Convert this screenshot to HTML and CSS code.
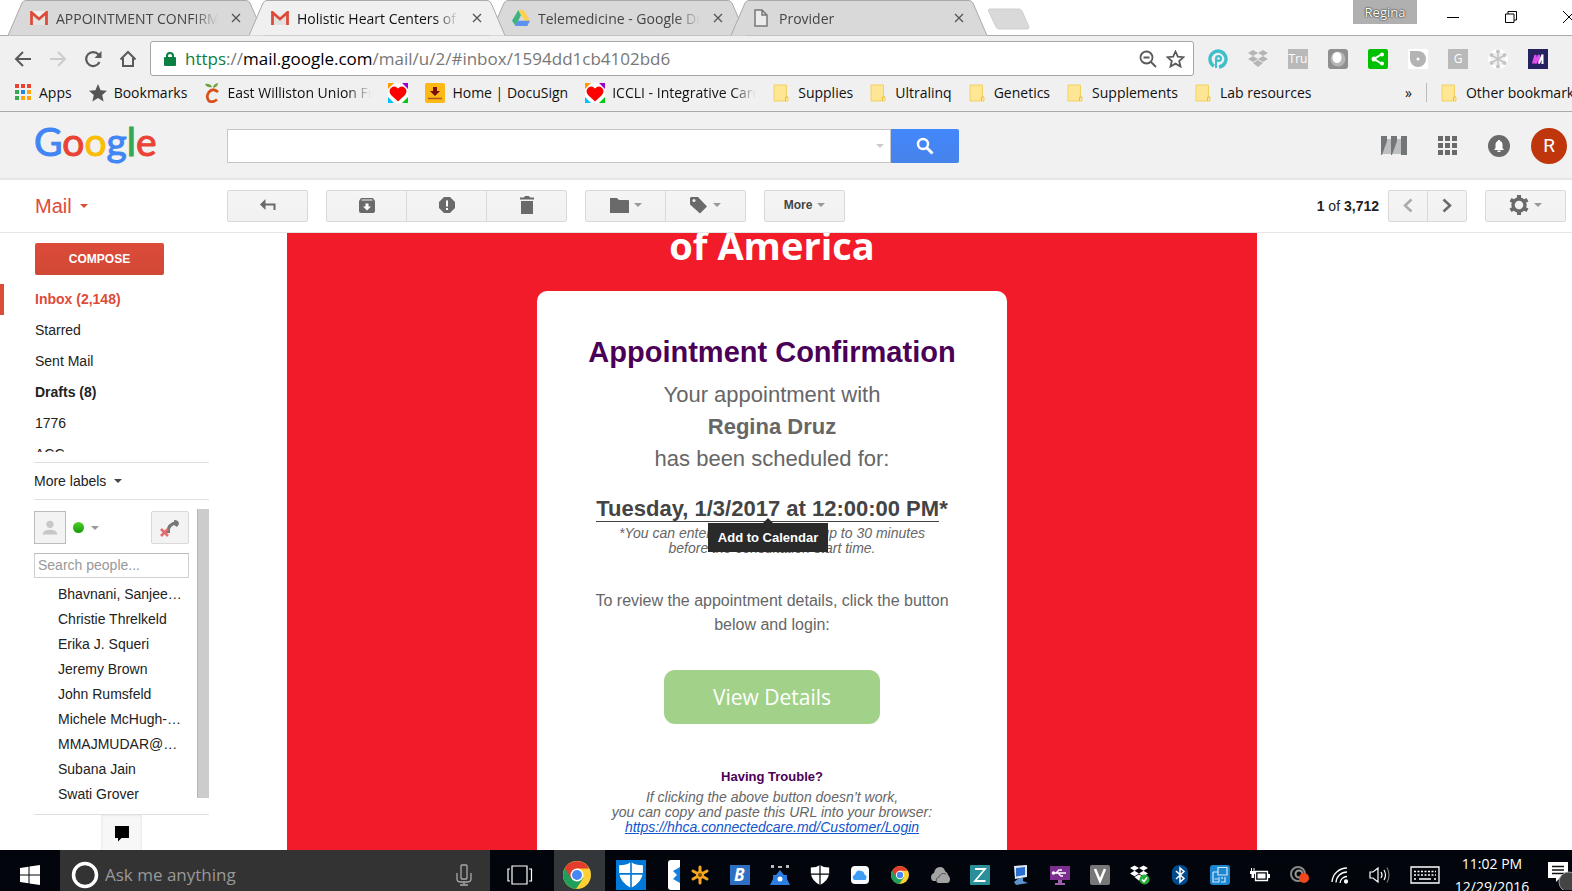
FILE: index.html
```html
<!DOCTYPE html>
<html lang="en">
<head>
  <meta charset="UTF-8" />
  <meta name="viewport" content="width=device-width, initial-scale=1.0"/>
  <title>Holistic Heart Centers of America - Gmail</title>
  <link rel="stylesheet" href="styles.css">
</head>
<body>
  <!-- shared icons -->
  <svg class="defs" width="0" height="0">
    <symbol id="tab-shape" viewBox="0 0 256 36" preserveAspectRatio="none">
      <path d="M0 35.5 L14 3 Q15.500 .5 18 .5 H238 Q240.500 .5 242 3 L256 35.500" />
    </symbol>
    <symbol id="close" viewBox="0 0 10 10"><path d="M1 1 L9 9 M9 1 L1 9" stroke="#555" stroke-width="1.300" /></symbol>
    <symbol id="gmail" viewBox="0 0 18 14">
      <rect width="18" height="14" rx="1" fill="#eee" />
      <path d="M3 3 L9 8 L15 3 V14 H3z" fill="#e2e2e2" />
      <path d="M1.500 14 V1.500 L9 8 L16.500 1.500 V14" fill="none" stroke="#dd4b39" stroke-width="2.800" />
    </symbol>
    <symbol id="folder" viewBox="0 0 16 18">
      <path d="M1 1 H13.500 V13 H15 V17 H1z" fill="#ffe694" stroke="#f2d063" />
      <path d="M12.500 17 V13 H15" fill="none" stroke="#e9bf40" />
    </symbol>
    <symbol id="heart" viewBox="0 0 20 20">
      <rect width="20" height="20" fill="#fff" />
      <path d="M0 0 H6 L0 6z" fill="#ff9a00" /><path d="M14 0 H20 V6z" fill="#9a00d0" />
      <path d="M0 14 V20 H6z" fill="#00c0ff" /><path d="M20 14 V20 H14z" fill="#00c814" />
      <path d="M10 18.500 L3 12 Q0 8 3 5 Q6.500 2 10 5.500 Q13.500 2 17 5 Q20 8 17 12z" fill="red" />
    </symbol>
    <symbol id="chrome" viewBox="0 0 28 28">
      <circle cx="14" cy="14" r="14" fill="#fdd033" />
      <path d="M14 14 L1.900 7 A14 14 0 0 0 13 28 L20 17.500z" fill="#1fa05a" />
      <path d="M1.900 7 A14 14 0 0 1 26.200 7.500 H14 L8 17.500z" fill="#e33b2e" />
      <circle cx="14" cy="14" r="6.500" fill="#fff" /><circle cx="14" cy="14" r="5" fill="#4688f4" />
    </symbol>
    <symbol id="shield" viewBox="0 0 22 24">
      <path d="M11 0 Q15 3 22 3 V10 Q21 19 11 24 Q1 19 0 10 V3 Q7 3 11 0z" fill="#fff" />
      <path d="M11 0 V24 M0 11 H22" stroke="currentColor" stroke-width="1.500" />
    </symbol>
    <symbol id="dropbox" viewBox="0 0 20 18">
      <path d="M5 0 L10 3 L5 6 L0 3z M15 0 L20 3 L15 6 L10 3z M5 6 L10 9 L5 12 L0 9z M15 6 L20 9 L15 12 L10 9z M5 13 L10 10 L15 13 L10 17z" fill="currentColor" />
    </symbol>
  </svg>

  <header class="browser">
    <div class="tab-strip">
      <div class="tab">
        <svg class="tab-bg"><use href="#tab-shape" /></svg>
        <svg width="18" height="14"><use href="#gmail" /></svg>
        <span class="tab-title">APPOINTMENT CONFIRMATION</span>
        <button class="tab-close" aria-label="Close tab"><svg width="10" height="10"><use href="#close" /></svg></button>
      </div>
      <div class="tab active">
        <svg class="tab-bg"><use href="#tab-shape" /></svg>
        <svg width="18" height="14"><use href="#gmail" /></svg>
        <span class="tab-title">Holistic Heart Centers of America</span>
        <button class="tab-close" aria-label="Close tab"><svg width="10" height="10"><use href="#close" /></svg></button>
      </div>
      <div class="tab">
        <svg class="tab-bg"><use href="#tab-shape" /></svg>
        <svg width="18" height="18" viewBox="0 0 20 18">
          <path d="M7 0 H13 L20 12 H14z" fill="#ffd04b" /><path d="M7 0 L10 6 L4 18 L0 12z" fill="#3fb37f" /><path d="M6.500 12 H20 L17 18 H3.500z" fill="#5b92f0" />
        </svg>
        <span class="tab-title">Telemedicine - Google Drive</span>
        <button class="tab-close" aria-label="Close tab"><svg width="10" height="10"><use href="#close" /></svg></button>
      </div>
      <div class="tab">
        <svg class="tab-bg"><use href="#tab-shape" /></svg>
        <svg width="18" height="18" viewBox="0 0 18 18"><path d="M2 1 H9 L14 6 V17 H2z M9 1 V6 H14" fill="#ececec" stroke="#777" stroke-width="1.500" /></svg>
        <span class="tab-title">Provider</span>
        <button class="tab-close" aria-label="Close tab"><svg width="10" height="10"><use href="#close" /></svg></button>
      </div>
      <button class="new-tab" aria-label="New tab">
        <svg width="44" height="22" viewBox="0 0 44 22"><path d="M3 1 H32 Q34 1 35 3 L42 19 Q42 21 40 21 H12 Q10 21 9 19 L1.500 3 Q1 1 3 1z" fill="#d9d9d9" stroke="#cfcfcf" /></svg>
      </button>
      <div class="window-controls">
        <button class="profile">Regina</button>
        <button class="win" aria-label="Minimize"><svg width="12" height="12"><path d="M0 6.500 H12" stroke="#000" /></svg></button>
        <button class="win" aria-label="Restore"><svg width="12" height="12" fill="none" stroke="#000"><path d="M.5 3 H9 V11.500 H.5z M3 3 V.5 H11.500 V9 H9" /></svg></button>
        <button class="win" aria-label="Close"><svg width="12" height="12"><path d="M0 0 L12 12 M12 0 L0 12" stroke="#000" /></svg></button>
      </div>
    </div>

    <div class="address-row">
      <div class="nav-buttons">
        <button aria-label="Back"><svg width="18" height="18" fill="none" stroke="#5a5a5a" stroke-width="2"><path d="M17 9 H2 M9 2 L2 9 L9 16" /></svg></button>
        <button aria-label="Forward"><svg width="18" height="18" fill="none" stroke="#ccc" stroke-width="2"><path d="M1 9 H16 M9 2 L16 9 L9 16" /></svg></button>
        <button aria-label="Reload"><svg width="18" height="18" fill="none" stroke="#5a5a5a" stroke-width="2.200"><path d="M15.500 12 A7 7 0 1 1 14.500 4.500" /><path d="M17.500 1 V8 H10.500z" fill="#5a5a5a" stroke="none" /></svg></button>
        <button aria-label="Home"><svg width="18" height="18" fill="none" stroke="#5a5a5a" stroke-width="2"><path d="M1.500 9.500 L9 2 L16.500 9.500 M4 8 V16 H14 V8" /></svg></button>
      </div>
      <div class="omnibox">
        <svg width="12" height="14" viewBox="0 0 12 14"><rect y="5" width="12" height="9" rx="1" fill="#0b8043" /><path d="M3 6 V4 Q3 1 6 1 Q9 1 9 4 V6" fill="none" stroke="#0b8043" stroke-width="2" /></svg>
        <span class="url"><span class="scheme">https</span>://<span class="host">mail.google.com</span>/mail/u/2/#inbox/1594dd1cb4102bd6</span>
        <button aria-label="Zoom"><svg width="18" height="18" fill="none" stroke="#5a5a5a" stroke-width="1.800"><circle cx="7.500" cy="7.500" r="6" /><path d="M4.500 7.500 H10.500 M12 12 L17 17" /></svg></button>
        <button aria-label="Bookmark this page"><svg width="19" height="18" viewBox="0 0 19 18"><path d="M9.500 1.500 L11.800 6.700 L17.500 7.200 L13.200 11 L14.500 16.500 L9.500 13.600 L4.500 16.500 L5.800 11 L1.500 7.200 L7.200 6.700z" fill="none" stroke="#5a5a5a" stroke-width="1.800" /></svg></button>
      </div>
      <div class="extensions">
        <button aria-label="Extension"><svg width="20" height="20"><path d="M6 17 A8 8 0 1 1 11 18" fill="none" stroke="#3fbfcb" stroke-width="3.400" /><circle cx="10.500" cy="9.500" r="3.500" fill="#3fbfcb" /><circle cx="10.500" cy="9.500" r="1.300" fill="#f0f0f0" /><path d="M8 10 V19" stroke="#3fbfcb" stroke-width="2" /></svg></button>
        <button class="dim" aria-label="Dropbox"><svg width="20" height="18"><use href="#dropbox" /></svg></button>
        <button class="ext-letter" aria-label="Tru">Tru</button>
        <button aria-label="Extension"><svg width="20" height="20"><rect width="20" height="20" rx="3" fill="#8f8f8f" /><circle cx="10" cy="10" r="7.500" fill="#b5b5b5" /><ellipse cx="9" cy="8.500" rx="4.500" ry="5.500" fill="#fff" /></svg></button>
        <button aria-label="Share"><svg width="20" height="20"><rect width="20" height="20" rx="2" fill="#00c000" /><path d="M14 5 L6 10 L14 15" fill="none" stroke="#fff" stroke-width="2" /><circle cx="14" cy="5.500" r="2" fill="#fff" /><circle cx="6" cy="10" r="2.500" fill="#fff" /><circle cx="14" cy="14.500" r="2" fill="#fff" /></svg></button>
        <button aria-label="Extension"><svg width="20" height="20"><rect width="20" height="20" fill="#fff" /><path d="M2 2 H10 A8 8 0 1 1 2 10z" fill="#b3b3b3" /><circle cx="10" cy="10" r="1.500" fill="#fff" /></svg></button>
        <button class="ext-letter" aria-label="G">G</button>
        <button aria-label="Extension"><svg width="20" height="20" fill="none" stroke="#c4c4c4" stroke-width="1.500"><circle cx="10" cy="10" r="8.500" stroke="#fff" stroke-width="3" /><path d="M10 3 V17 M4 6.500 L16 13.500 M16 6.500 L4 13.500" /><g fill="#c4c4c4" stroke="none"><circle cx="10" cy="2.500" r="2" /><circle cx="10" cy="17.500" r="2" /><circle cx="3.500" cy="6" r="2" /><circle cx="16.500" cy="6" r="2" /><circle cx="3.500" cy="14" r="2" /><circle cx="16.500" cy="14" r="2" /></g></svg></button>
        <button aria-label="Extension"><svg width="20" height="20"><rect width="20" height="20" fill="#262262" /><path d="M5 14.500 L7.500 6 V14.500 L11 6 V14.500" fill="none" stroke="#e44df0" stroke-width="2.200" /><path d="M11 14.500 L14.500 5.500 V15" fill="none" stroke="#fff" stroke-width="2" /></svg></button>
      </div>
    </div>

    <nav class="bookmarks">
      <a href="#"><svg width="17" height="17"><g fill="#ea4335"><path d="M0 0h4v4h-4z M6 0h4v4h-4z M12 0h4v4h-4z" /></g><path d="M0 6h4v4h-4z M0 12h4v4h-4z" fill="#34a853" /><path d="M6 6h4v4h-4z" fill="#1e88e5" /><path d="M12 6h4v4h-4z M6 12h4v4h-4z M12 12h4v4h-4z" fill="#fba60d" /></svg>Apps</a>
      <a href="#"><svg width="18" height="18" viewBox="0 0 18 18"><path d="M9 0 L11.600 6.200 L18 6.800 L13.200 11 L14.600 17.500 L9 14 L3.400 17.500 L4.800 11 L0 6.800 L6.400 6.200z" fill="#555" /></svg>Bookmarks</a>
      <a href="#"><svg width="16" height="20"><path d="M14 9 Q9 4.500 5 9 Q1.500 14 5 18 Q9 20 13 16.500" fill="none" stroke="#d8501c" stroke-width="2.800" /><path d="M1 1 Q6 0 8 4 Q3 5 1 1z M9 5 Q9 1 14 0 Q14 4 9 5z" fill="#6ba33a" /></svg><span class="cut">East Williston Union Free</span></a>
      <a href="#" aria-label="Heart"><svg width="20" height="20"><use href="#heart" /></svg></a>
      <a href="#"><svg width="20" height="20"><rect width="20" height="20" rx="2" fill="#fcb814" /><path d="M8 4 H12 V8 H15 L10 13 L5 8 H8z" fill="#7a0d0d" /><path d="M3 15.500 H17" stroke="#b5541b" stroke-width="1.500" /></svg>Home | DocuSign</a>
      <a href="#"><svg width="20" height="20"><use href="#heart" /></svg><span class="cut">ICCLI - Integrative Cardiology</span></a>
      <a class="folder" href="#"><svg width="16" height="18"><use href="#folder" /></svg>Supplies</a>
      <a class="folder" href="#"><svg width="16" height="18"><use href="#folder" /></svg>Ultralinq</a>
      <a class="folder" href="#"><svg width="16" height="18"><use href="#folder" /></svg>Genetics</a>
      <a class="folder" href="#"><svg width="16" height="18"><use href="#folder" /></svg>Supplements</a>
      <a class="folder" href="#"><svg width="16" height="18"><use href="#folder" /></svg>Lab resources</a>
      <div class="bookmarks-end">
        <button class="overflow">»</button>
        <a class="folder" href="#"><svg width="16" height="18"><use href="#folder" /></svg>Other bookmarks</a>
      </div>
    </nav>
  </header>

  <header class="google-bar">
    <a class="logo" href="#" aria-label="Google"><span class="b">G</span><span class="r">o</span><span class="y">o</span><span class="b">g</span><span class="g">l</span><span class="r">e</span></a>
    <form class="search">
      <div class="search-field">
        <input type="text" name="q" aria-label="Search mail">
        <button type="button" aria-label="Search options"><i class="caret light"></i></button>
      </div>
      <button class="search-button" type="button" aria-label="Search"><svg width="18" height="18" fill="none" stroke="#fff"><circle cx="7" cy="7" r="5" stroke-width="2.500" /><path d="M10.500 10.500 L16.500 16.500" stroke-width="3" /></svg></button>
    </form>
    <div class="account">
      <button aria-label="Mixmax"><svg width="26" height="20"><path d="M6 3 H10 V18 H1z M16 3 H20 V18 H11z" fill="#bdbfc1" /><path d="M0 0 H6 V5 L1 19 H0z M10 0 H16 V5 L11 19 H10z M20 0 H26 V19 H20z" fill="#727679" /></svg></button>
      <button aria-label="Apps"><svg width="19" height="19" fill="#6a6a6a"><path d="M0 0h5v5h-5z M7 0h5v5h-5z M14 0h5v5h-5z M0 7h5v5h-5z M7 7h5v5h-5z M14 7h5v5h-5z M0 14h5v5h-5z M7 14h5v5h-5z M14 14h5v5h-5z" /></svg></button>
      <button aria-label="Notifications"><svg width="22" height="22"><circle cx="11" cy="11" r="11" fill="#6a6a6a" /><path d="M6 15 L7.500 13 V9.500 Q7.500 6.500 10 6 V5 H12 V6 Q14.500 6.500 14.500 9.500 V13 L16 15z M9.500 15.500 H12.500 V17 H9.500z" fill="#fff" /></svg></button>
      <button class="avatar">R</button>
    </div>
  </header>

  <div class="mail-toolbar">
    <button class="mail-menu">Mail <i class="caret red"></i></button>
    <div class="actions">
      <div class="group">
        <button aria-label="Back to Inbox"><svg width="16" height="12"><path d="M4 5.500 H14.500 V11" fill="none" stroke="#6a6a6a" stroke-width="2" /><path d="M0 5.500 L5.500 0 V11z" fill="#6a6a6a" /></svg></button>
      </div>
      <div class="group">
        <button aria-label="Archive"><svg width="16" height="15"><path d="M2 0 H14 L16 3 V13 Q16 15 14 15 H2 Q0 15 0 13 V3z" fill="#6a6a6a" /><path d="M2.500 2 H13.500" stroke="#f3f3f3" /><path d="M6.500 5.500 H9.500 V8.500 H12 L8 12.500 L4 8.500 H6.500z" fill="#fff" /></svg></button>
        <button aria-label="Report spam"><svg width="16" height="16"><path d="M5 0 H11 L16 5 V11 L11 16 H5 L0 11 V5z" fill="#6a6a6a" /><path d="M7 3.500 H9 V9.500 H7z M7 11 H9 V13 H7z" fill="#fff" /></svg></button>
        <button aria-label="Delete"><svg width="14" height="18" fill="#6a6a6a"><path d="M0 1.500 H4 L5 0 H9 L10 1.500 H14 V3.500 H0z M1 5 H13 V18 H1z" /></svg></button>
      </div>
      <div class="group">
        <button aria-label="Move to"><svg width="19" height="16"><path d="M0 1 H7 L9 3 H18 Q19 3 19 4 V16 H0z" fill="#6a6a6a" /></svg><i class="caret"></i></button>
        <button aria-label="Labels"><svg width="18" height="18"><path d="M1 1 H8 L17 10.500 L10 17.500 L0 8.500 V2z" fill="#6a6a6a" /><circle cx="4" cy="4.500" r="1.500" fill="#f3f3f3" /></svg><i class="caret"></i></button>
      </div>
      <div class="group">
        <button>More <i class="caret"></i></button>
      </div>
    </div>
    <div class="pager">
      <span><b>1</b> of <b>3,712</b></span>
      <div class="group narrow">
        <button aria-label="Newer"><svg width="10" height="15"><path d="M8.500 1.500 L2 7.500 L8.500 13.500" fill="none" stroke="#aaa" stroke-width="2.500" /></svg></button>
        <button aria-label="Older"><svg width="10" height="15"><path d="M1.500 1.500 L8 7.500 L1.500 13.500" fill="none" stroke="#6a6a6a" stroke-width="2.500" /></svg></button>
      </div>
      <div class="group">
        <button aria-label="Settings"><svg width="20" height="20" viewBox="0 0 20 20"><circle cx="10" cy="10" r="6" fill="none" stroke="#6a6a6a" stroke-width="3.400" /><path d="M8 0h4v4h-4z M8 16h4v4h-4z M.5 6.500 L2.500 3 L6 5 L4 8z M19.500 6.500 L17.500 3 L14 5 L16 8z M.5 13.500 L2.500 17 L6 15 L4 12z M19.500 13.500 L17.500 17 L14 15 L16 12z" fill="#6a6a6a" /></svg><i class="caret"></i></button>
      </div>
    </div>
  </div>

  <main>
    <aside>
      <button class="compose">COMPOSE</button>
      <nav class="labels">
        <a class="current" href="#">Inbox (2,148)</a>
        <a href="#">Starred</a>
        <a href="#">Sent Mail</a>
        <a class="bold" href="#">Drafts (8)</a>
        <a href="#">1776</a>
        <a href="#">ACC</a>
      </nav>
      <button class="more-labels">More labels <i class="caret dark"></i></button>
      <div class="chat">
        <div class="chat-body">
          <div class="chat-head">
            <span class="photo"><svg width="16" height="16" viewBox="0 0 22 20" fill="#c8c8c8"><circle cx="11" cy="5" r="5" /><path d="M1 19 Q1 12.500 11 12.500 Q21 12.500 21 19z" /></svg></span>
            <button class="status" aria-label="Status"><i class="online"></i><i class="caret"></i></button>
            <button class="call" aria-label="Call"><svg width="20" height="18"><path d="M8 13 Q8 5 17 3.500" fill="none" stroke="#777" stroke-width="3" /><path d="M14 1 Q19 1 19 5 L17 8 L14 6z M6 10 H10 V14 H6z" fill="#777" /><path d="M1 10 L8 17 M8 10 L1 17" stroke="#e66b6b" stroke-width="2.500" /></svg></button>
          </div>
          <input type="text" placeholder="Search people..." aria-label="Search people">
          <ul>
            <li>Bhavnani, Sanjeev K</li>
            <li>Christie Threlkeld</li>
            <li>Erika J. Squeri</li>
            <li>Jeremy Brown</li>
            <li>John Rumsfeld</li>
            <li>Michele McHugh-Mills</li>
            <li>MMAJMUDAR@mail.com</li>
            <li>Subana Jain</li>
            <li>Swati Grover</li>
          </ul>
        </div>
        <div class="scrollbar"></div>
      </div>
      <div class="chat-tabs">
        <button aria-label="Conversations"><svg width="16" height="16"><path d="M1 0 H15 V12 H7.500 L4 15.500 V12 H1z" /></svg></button>
      </div>
    </aside>

    <article class="email">
      <h1>of America</h1>
      <section class="card">
        <h2>Appointment Confirmation</h2>
        <p class="lead">Your appointment with<br><b>Regina Druz</b><br>has been scheduled for:</p>
        <p class="when"><a href="#">Tuesday, 1/3/2017 at 12:00:00 PM</a>*<span class="tooltip">Add to Calendar</span></p>
        <p class="fine">*You can enter the waiting room up to 30 minutes<br>before the consultation start time.</p>
        <p class="review">To review the appointment details, click the button<br>below and login:</p>
        <button class="details">View Details</button>
        <h3>Having Trouble?</h3>
        <p class="fine">If clicking the above button doesn’t work,<br>you can copy and paste this URL into your browser:<br><a href="#">https://hhca.connectedcare.md/Customer/Login</a></p>
      </section>
    </article>
  </main>

  <footer class="taskbar">
    <button class="start" aria-label="Start"><svg width="20" height="20" fill="#fff"><path d="M0 3 L8.500 1.700 V9.500 H0z M9.500 1.500 L20 0 V9.500 H9.500z M0 10.500 H8.500 V18.300 L0 17z M9.500 10.500 H20 V20 L9.500 18.500z" /></svg></button>
    <div class="cortana">
      <svg width="28" height="28"><circle cx="14" cy="14" r="11.500" fill="none" stroke="#fff" stroke-width="3.500" /></svg>
      <input type="text" placeholder="Ask me anything" aria-label="Ask me anything">
      <svg width="16" height="22" fill="none" stroke="#aaa" stroke-width="1.300"><rect x="5" y="1" width="6" height="14" rx="1" /><path d="M1 9 V15 Q1 18 5 18 H11 Q15 18 15 15 V9 M8 18 V21 M4 21 H12" /></svg>
    </div>
    <button class="task" aria-label="Task view"><svg width="26" height="20" fill="none" stroke="#fff" stroke-width="1.200"><path d="M5 1 H20 V19 H5z M3 4 H1 V16 H3 M22 4 H24.500 V16 H22" /></svg></button>
    <button class="task open" aria-label="Chrome"><svg width="28" height="28"><use href="#chrome" /></svg></button>
    <button class="task defender" aria-label="Defender"><svg width="24" height="26"><use href="#shield" /></svg></button>
    <div class="tray">
      <button class="half" aria-label="Dropbox"><svg width="12" height="30"><rect width="16" height="30" rx="3" fill="#fff" /><path d="M12 7 L5 11 L9 15 L5 19 L12 23z" fill="#1081de" /></svg></button>
      <button aria-label="Updates"><svg width="20" height="20" stroke="#f5a623" stroke-width="3" stroke-linecap="round"><path d="M10 2 V18 M3 6 L17 14 M17 6 L3 14" /><circle cx="10" cy="10" r="3" fill="#7a4a00" stroke-width="2" /></svg></button>
      <button aria-label="B"><svg width="20" height="20"><rect width="20" height="20" fill="#2f6fc1" /><text x="4" y="16" class="letter italic">B</text></svg></button>
      <button aria-label="Network"><svg width="20" height="20"><path d="M1 0h3v3h-3z M8 1h4v2h-4z M16 0h3v3h-3z" fill="#bbb" /><path d="M10 5 L14 10 H17 V14 L20 20 H0 L3 14 V10 H6z" fill="#2a7de1" /><circle cx="10" cy="14" r="2.500" fill="#fff" /></svg></button>
      <button aria-label="Security"><svg width="20" height="20"><use href="#shield" /></svg></button>
      <button aria-label="iCloud"><svg width="20" height="20"><rect x="1" y="1" width="18" height="18" rx="4" fill="#f7f9fc" /><path d="M4 15 Q1 11 5 9.500 Q7 4 11 6 Q14 6 14.500 9.500 Q18 11 15.500 15z" fill="#3f9cf5" /></svg></button>
      <button aria-label="Chrome"><svg width="18" height="18"><use href="#chrome" /></svg></button>
      <button aria-label="OneDrive"><svg width="20" height="16" fill="#a3a3a3"><path d="M3 14 Q0 12 1.500 8 Q3 6 4 6 Q5 0 10 0 Q14 0 15 4 Q18 6 18 8 Q20 10 20 12 Q20 16 17 16 H8 Q6 15 6 14z" /><path d="M7 15 Q5 11 9 10 Q11 5 16 7" fill="none" stroke="#555" /></svg></button>
      <button aria-label="Z"><svg width="20" height="20"><rect width="20" height="20" rx="1" fill="#2a8f98" /><path d="M5 4 H15 L5 16 H15.500" fill="none" stroke="#fff" stroke-width="1.800" /></svg></button>
      <button aria-label="Displays"><svg width="18" height="20"><path d="M3 1 L16 0 V12 L4 14z" fill="#dfeaf5" /><path d="M5 3 L14 2 V10 L5 11.500z" fill="#2a6fd0" /><path d="M8 13 H12 V16 L17 18 L5 20 L3 17z" fill="#5b93cc" /></svg></button>
      <button aria-label="USB"><svg width="20" height="20"><rect y="1" width="20" height="14" fill="#7d2f8f" /><path d="M8 15 H12 V18 H15 V20 H5 V18 H8z" fill="#9d5fac" /><path d="M3 8 H16 M6 8 L9 5 H12 M8 8 L11 11 H13" fill="none" stroke="#fff" stroke-width="1.300" /><circle cx="3.500" cy="8" r="1.800" fill="#fff" /></svg></button>
      <button aria-label="V"><svg width="20" height="20"><rect width="20" height="20" rx="2" fill="#777" /><path d="M5 4 L10 16 L15 4" fill="none" stroke="#fff" stroke-width="2.500" /></svg></button>
      <button class="white" aria-label="Dropbox"><svg width="20" height="20"><svg width="18" height="17"><use href="#dropbox" /></svg><circle cx="14.500" cy="14.500" r="5" fill="#27ae3a" /><path d="M12 14.500 L14 16.500 L17 12.500" fill="none" stroke="#fff" stroke-width="1.500" /></svg></button>
      <button aria-label="Bluetooth"><svg width="16" height="20"><rect width="16" height="20" rx="7" fill="#004a8f" /><path d="M4 6 L12 13.500 L8 17 V3 L12 6.500 L4 14" fill="none" stroke="#fff" stroke-width="1.500" /></svg></button>
      <button aria-label="Graphics"><svg width="20" height="20"><rect width="20" height="20" rx="3" fill="#1c86d1" /><path d="M8 2.500 H17 V10 H8z M3 7 H8 M3 7 V17 H9 V12 M4.500 14 H8 M12 12 V14 M15 12 V17 H11" fill="none" stroke="#cfe8fa" stroke-width="1.200" /></svg></button>
      <button aria-label="Battery"><svg width="20" height="14"><path d="M5.500 3.500 H17.500 V12.500 H5.500z" fill="none" stroke="#fff" stroke-width="1.300" /><path d="M7.500 5.500 H15.500 V10.500 H7.500z M18 6 H20 V10 H18z M0 3 H5 V6 H4 V10 H1.500 V6 H0z M1 0h1v3h-1z M3.500 0h1v3h-1z" fill="#fff" /></svg></button>
      <button aria-label="Creative Cloud"><svg width="20" height="18"><circle cx="8" cy="8" r="7" fill="none" stroke="#888" stroke-width="2" /><circle cx="9" cy="8" r="3.500" fill="none" stroke="#999" stroke-width="2" /><circle cx="14" cy="12" r="5" fill="#f0471c" /></svg></button>
      <button aria-label="Wi-Fi"><svg width="18" height="18" fill="none" stroke="#fff" stroke-width="1.300"><path d="M1 16 A15 15 0 0 1 16 2 M5 16.500 A11 11 0 0 1 16 6 M9 17 A7 7 0 0 1 16 10.500" /><circle cx="15" cy="15.500" r="1.500" fill="#fff" /></svg></button>
      <button aria-label="Volume"><svg width="22" height="18" fill="none" stroke="#fff" stroke-width="1.200"><path d="M1 6 H4 L9 2 V16 L4 12 H1z M12 6 Q14 9 12 12 M15 4 Q18 9 15 14" /><path d="M18 1.500 Q22 9 18 16.500" stroke="#777" /></svg></button>
      <button class="keyboard" aria-label="Keyboard"><svg width="30" height="18" fill="none" stroke="#fff" stroke-width="1.300"><path d="M1 1 H29 V17 H1z" /><path d="M4 5.500 H26 M4 9 H26" stroke-dasharray="2 1.500" /><path d="M4 13 H6 M9 13 H21 M24 13 H26" /></svg></button>
      <button class="clock">11:02 PM<br>12/29/2016</button>
      <button class="notify" aria-label="Notifications"><svg width="24" height="30"><path d="M0 2 H20 V18 H12 L8 22 V18 H0z" fill="#fff" /><path d="M4 6.500 H16 M4 10 H16 M4 13.500 H16" stroke="#111" stroke-width="1.500" /><circle cx="21" cy="22" r="10" fill="#444" stroke="#999" /></svg></button>
    </div>
  </footer>
</body>
</html>
```
FILE: styles.css
```css
* {
  box-sizing: border-box;
}

body {
  margin: 0;
  height: 100vh;
  display: flex;
  flex-direction: column;
  overflow: hidden;
  background: #fff;
  color: #222;
  font-family: "Liberation Sans", Arial, sans-serif;
  font-size: 14px;
}

button {
  border: 0;
  padding: 0;
  background: none;
  color: inherit;
  font: inherit;
  display: flex;
  align-items: center;
  justify-content: center;
  cursor: pointer;
}

a {
  color: inherit;
  text-decoration: none;
}

svg {
  flex: none;
}

.defs {
  position: absolute;
}

.caret {
  border: 4px solid transparent;
  border-top-color: #999;
  border-bottom: 0;
}

.caret.light { border-top-color: #ccc; }
.caret.red { border-top-color: #dd4b39; }
.caret.dark { border-top-color: #444; }

/* browser window */
.browser {
  flex: none;
  background: #f0f0f0;
  border-bottom: 1px solid #aaa;
  color: #111;
  font-family: "Open Sans", "Segoe UI", sans-serif;
}

.tab-strip {
  display: flex;
  height: 36px;
  padding-left: 8px;
  background: linear-gradient(#aaa, #aaa) bottom / 100% 1px no-repeat #fff;
}

.tab {
  position: relative;
  display: flex;
  align-items: center;
  width: 256px;
  margin-right: -15px;
  padding: 0 18px 0 22px;
  gap: 8px;
  color: #444;
}

.tab-bg {
  position: absolute;
  left: 0;
  top: 0;
  width: 100%;
  height: 36px;
  fill: #d9d9d9;
  stroke: #aaa;
}

.tab.active {
  z-index: 1;
  color: #111;
}

.tab.active .tab-bg {
  fill: #f0f0f0;
}

.tab > :not(.tab-bg) {
  position: relative;
}

.tab-title,
.cut {
  overflow: hidden;
  white-space: nowrap;
  mask-image: linear-gradient(to left, transparent, #000 24px);
}

.tab-title {
  flex: 1;
}

.tab-close {
  width: 20px;
  height: 20px;
}

.new-tab {
  margin: 8px 0 0 15px;
  height: 22px;
}

.window-controls {
  display: flex;
  align-items: flex-start;
  margin-left: auto;
  margin-right: -26px;
}

.profile {
  width: 64px;
  height: 24px;
  margin-right: 7px;
  background: #b0b0b0;
  color: #fff;
  font-size: 13px;
  text-shadow: 0 0 2px #222, 0 0 1px #222;
}

.win {
  width: 58px;
  height: 33px;
}

.address-row {
  display: flex;
  align-items: center;
  padding: 5px 24px 0 14px;
}

.nav-buttons {
  display: flex;
  gap: 17px;
  margin-right: 13px;
}

.omnibox {
  display: flex;
  flex: 1;
  align-items: center;
  height: 35px;
  gap: 9px;
  padding: 0 8px 0 13px;
  border: 1px solid #a5a5a5;
  border-radius: 3px;
  background: #fff;
}

.url {
  flex: 1;
  color: #777;
  font-size: 17px;
}

.scheme { color: #0b8043; }
.host { color: #000; }

.extensions {
  display: flex;
  gap: 20px;
  margin-left: 14px;
}

.extensions button {
  width: 20px;
  height: 20px;
}

.dim {
  color: #b5b5b5;
}

.extensions .ext-letter {
  background: #b9b9b9;
  color: #fff;
  font-size: 12px;
}

.bookmarks {
  display: flex;
  align-items: center;
  gap: 17px;
  height: 35px;
  padding: 0 0 2px 15px;
  white-space: nowrap;
}

.bookmarks a {
  display: flex;
  align-items: center;
  gap: 7px;
}

.bookmarks .folder {
  gap: 9px;
}

.cut {
  width: 144px;
}

.bookmarks-end {
  display: flex;
  width: 167px;
  margin-left: auto;
  overflow: hidden;
}

.overflow {
  padding-right: 14px;
  border-right: 1px solid #bbb;
  margin-right: 14px;
}

/* google bar */
.google-bar {
  display: flex;
  align-items: center;
  flex: none;
  height: 68px;
  padding: 1px 5px 0 34px;
  background: #f1f1f1;
  border-bottom: 2px solid #e5e5e5;
}

.logo {
  width: 193px;
  padding-bottom: 10px;
  font-family: Lato, sans-serif;
  font-size: 39px;
  line-height: 48px;
  -webkit-text-stroke: 1px currentColor;
}

.logo .b { color: #4285f4; }
.logo .r { color: #ea4335; }
.logo .y { color: #fbbc05; }
.logo .g { color: #34a853; }

.search {
  display: flex;
  flex: 0 1 732px;
  height: 34px;
}

.search-field {
  display: flex;
  flex: 1;
  border: 1px solid #c6c6c6;
  background: #fff;
}

.search-field input {
  flex: 1;
  border: 0;
  outline: 0;
  padding: 0 8px;
}

.search-field button {
  width: 20px;
}

.search-button {
  width: 68px;
  border-radius: 0 2px 2px 0;
  background: linear-gradient(#4387fd, #4683ea);
}

.account {
  display: flex;
  align-items: center;
  margin-left: auto;
}

.account button {
  margin-left: 31px;
}

.account .avatar {
  width: 36px;
  height: 36px;
  margin-left: 21px;
  border-radius: 50%;
  background: #bf360c;
  color: #fff;
  font-family: Roboto, sans-serif;
  font-size: 19px;
}

/* mail toolbar */
.mail-toolbar {
  display: flex;
  align-items: center;
  flex: none;
  height: 53px;
  padding: 0 6px 0 35px;
  border-bottom: 1px solid #e5e5e5;
}

.mail-menu {
  width: 192px;
  gap: 8px;
  justify-content: flex-start;
  color: #dd4b39;
  font-size: 20px;
}

.actions {
  display: flex;
  gap: 18px;
}

.group {
  display: flex;
  height: 32px;
  border: 1px solid #d9d9d9;
  border-radius: 2px;
  background: linear-gradient(#f5f5f5, #f1f1f1);
  color: #444;
  font-size: 12px;
  font-weight: bold;
}

.group button {
  width: 79px;
  padding-bottom: 2px;
  gap: 5px;
}

.group.narrow button {
  width: 38px;
}

.group button + button {
  width: 80px;
  border-left: 1px solid #d9d9d9;
}

.group.narrow button + button {
  width: 39px;
}

.pager {
  display: flex;
  align-items: center;
  margin-left: auto;
}

.pager .group {
  margin-left: 18px;
}

.pager .narrow {
  margin-left: 9px;
}

/* sidebar */
main {
  display: flex;
  flex: 1;
  min-height: 0;
  overflow: hidden;
}

aside {
  width: 287px;
  flex: none;
  padding: 10px 78px 0 34px;
}

.compose {
  width: 129px;
  height: 32px;
  margin-left: 1px;
  border-radius: 2px;
  background: linear-gradient(#dd4b39, #d14836);
  color: #fff;
  font-size: 12px;
  font-weight: bold;
}

.labels {
  height: 168px;
  margin: 9px 0 0 -34px;
  overflow: hidden;
}

.labels a {
  display: block;
  padding-left: 35px;
  line-height: 31px;
}

.labels .current {
  padding-left: 31px;
  border-left: 4px solid #dd4b39;
  color: #dd4b39;
  font-weight: bold;
}

.labels .bold {
  font-weight: bold;
}

.more-labels {
  width: 100%;
  height: 38px;
  margin-top: 10px;
  gap: 8px;
  justify-content: flex-start;
  border-top: 1px solid #e0e0e0;
  border-bottom: 1px solid #e0e0e0;
}

.chat {
  display: flex;
  justify-content: space-between;
  height: 315px;
  padding: 9px 0 16px;
  border-bottom: 1px solid #e0e0e0;
}

.chat-body {
  width: 155px;
}

.chat-head {
  display: flex;
  align-items: center;
  height: 37px;
}

.photo {
  display: flex;
  align-items: center;
  justify-content: center;
  width: 32px;
  height: 33px;
  border: 1px solid #bbb;
  background: #f3f3f3;
}

.status {
  gap: 7px;
  margin-left: 7px;
}

.online {
  width: 11px;
  height: 11px;
  border-radius: 50%;
  background: linear-gradient(#4fd02a, #179a08);
}

.call {
  width: 38px;
  height: 33px;
  margin-left: auto;
  border: 1px solid #d9d9d9;
  border-radius: 2px;
  background: #f3f3f3;
}

.chat-body input {
  width: 100%;
  height: 25px;
  margin-top: 7px;
  padding: 0 3px 1px;
  border: 1px solid #d0d0d0;
  border-top-color: #bbb;
  font: inherit;
}

.chat-body input::placeholder {
  color: #999;
}

.chat ul {
  margin: 4px 0 0;
  padding: 0 4px 0 24px;
  list-style: none;
  line-height: 25px;
}

.chat li {
  overflow: hidden;
  white-space: nowrap;
  text-overflow: ellipsis;
}

.scrollbar {
  width: 12px;
  border-left: 1px solid #b5b5b5;
  background: #ccc;
}

.chat-tabs button {
  width: 41px;
  height: 37px;
  margin: 0 auto;
  background: #f7f7f7;
  box-shadow: inset 0 0 3px #ddd;
}

/* email */
.email {
  flex: 1;
  margin-right: 315px;
  background: #f11b29;
}

.email h1 {
  margin: -14px 0 20px;
  color: #fff;
  font-family: "Open Sans", "Segoe UI", sans-serif;
  font-size: 38px;
  line-height: 52px;
  text-align: center;
}

.card {
  max-width: 470px;
  height: 600px;
  margin: 0 auto;
  padding-top: 42px;
  border-radius: 10px;
  background: #fff;
  color: #666;
  font-size: 16px;
  line-height: 24px;
  text-align: center;
}

.card p {
  margin: 0;
}

.card h2 {
  margin: 0;
  color: #4b0057;
  font-size: 29px;
  line-height: 38px;
}

.card .lead {
  padding-top: 8px;
  font-size: 22px;
  line-height: 32px;
}

.card .when {
  position: relative;
  padding-top: 18px;
  padding-bottom: 1px;
  color: #444;
  font-size: 22px;
  font-weight: bold;
  line-height: 32px;
}

.when a {
  border-bottom: 1px solid #444;
}

.tooltip {
  position: absolute;
  left: 171px;
  top: 48px;
  width: 120px;
  background: #2a2a2a;
  color: #fff;
  font-size: 13px;
  line-height: 29px;
}

.tooltip::before {
  content: "";
  position: absolute;
  left: 55px;
  top: -5px;
  border: 5px solid transparent;
  border-top: 0;
  border-bottom-color: #2a2a2a;
}

.card .fine {
  font-size: 14px;
  font-style: italic;
  line-height: 15px;
}

.card .review {
  padding: 33px 0;
}

.details {
  width: 216px;
  height: 54px;
  margin: 0 auto;
  border-radius: 11px;
  background: #a2d28a;
  color: #fff;
  font-family: "Open Sans", "Segoe UI", sans-serif;
  font-size: 21px;
}

.card h3 {
  margin: 40px 0 0;
  color: #4b0057;
  font-size: 13px;
  line-height: 26px;
}

.fine a {
  color: #15c;
  text-decoration: underline;
}

/* taskbar */
.taskbar {
  display: flex;
  flex: none;
  height: 41px;
  overflow: hidden;
  background: #02060c;
  color: #fff;
  font-family: "Open Sans", "Segoe UI", sans-serif;
}

.taskbar > * {
  height: 49px;
}

.start {
  width: 60px;
}

.cortana {
  display: flex;
  align-items: center;
  width: 430px;
  padding: 0 18px 0 11px;
  gap: 6px;
  background: #333;
}

.cortana input {
  flex: 1;
  border: 0;
  padding: 0;
  outline: 0;
  background: none;
  color: #fff;
  font-family: inherit;
  font-size: 17px;
}

.cortana input::placeholder {
  color: #999;
}

.task {
  width: 51px;
  margin-left: 4px;
}

.task.open {
  margin-left: 9px;
  padding-right: 6px;
  background: #33373a;
}

.taskbar .defender {
  width: 30px;
  height: 30px;
  margin: 10px 0 0 11px;
  background: #0078d7;
  color: #0078d7;
}

.tray {
  display: flex;
  margin-left: auto;
}

.tray button {
  width: 40px;
  color: #02060c;
}

.tray .half {
  width: 12px;
}

.tray .white {
  color: #fff;
}

.tray .keyboard {
  width: 50px;
}

.tray .clock {
  display: block;
  width: 84px;
  color: #fff;
  line-height: 23px;
}

.tray .notify {
  width: 38px;
  padding-left: 14px;
}

.letter {
  fill: #fff;
  font-size: 17px;
  font-weight: bold;
}

.italic {
  font-style: italic;
}
```
